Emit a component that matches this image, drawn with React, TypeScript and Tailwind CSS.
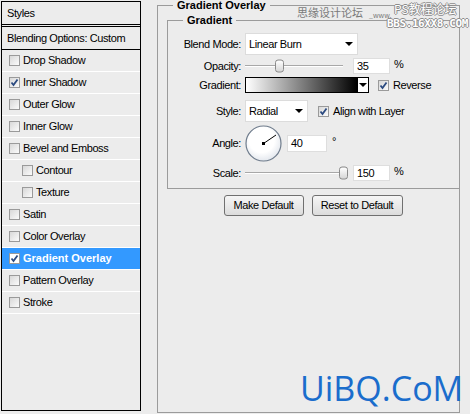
import React from "react";

type Item = { label: string; checked?: boolean; indent?: boolean; active?: boolean };

const items: Item[] = [
  { label: "Drop Shadow" },
  { label: "Inner Shadow", checked: true },
  { label: "Outer Glow" },
  { label: "Inner Glow" },
  { label: "Bevel and Emboss" },
  { label: "Contour", indent: true },
  { label: "Texture", indent: true },
  { label: "Satin" },
  { label: "Color Overlay" },
  { label: "Gradient Overlay", checked: true, active: true },
  { label: "Pattern Overlay" },
  { label: "Stroke" },
];

const Check = ({ checked, white }: { checked?: boolean; white?: boolean }) => (
  <div
    className={`w-[11px] h-[11px] shrink-0 border border-[#9a9a9a] flex items-center justify-center ${
      white ? "bg-white" : "bg-gradient-to-br from-[#d8d8d8] to-[#fbfbfb]"
    }`}
  >
    {checked && (
      <svg width="9" height="9" viewBox="0 0 9 9">
        <path d="M1.5 4.5 L3.5 7 L7.5 1.5" fill="none" stroke="#2b4a80" strokeWidth="1.8" />
      </svg>
    )}
  </div>
);

const Arrow = () => (
  <div className="w-0 h-0 border-l-[4px] border-r-[4px] border-t-[4px] border-l-transparent border-r-transparent border-t-black" />
);

const Slider = ({ pos }: { pos: number }) => (
  <div className="relative w-[98px] h-full ml-[4px] flex items-center">
    <div className="w-full h-[2px] border-t border-[#a8a8a8] border-b border-b-white" />
    <div
      className="absolute top-1/2 -translate-y-1/2 w-[9px] h-[13px] rounded-[3px] border border-[#8a8a8a] bg-gradient-to-b from-white to-[#d6d6d6]"
      style={{ left: pos }}
    />
  </div>
);

const Field = ({ value, w }: { value: string; w: string }) => (
  <div className={`${w} h-[16px] bg-white border border-[#dedede] pl-[3px] flex items-center`}>{value}</div>
);

const Label = ({ children }: { children: React.ReactNode }) => (
  <div className="w-[73px] text-right shrink-0">{children}</div>
);

export default function App() {
  return (
    <div className="relative w-[470px] h-[414px] bg-[#ececec] flex items-start overflow-hidden font-['Liberation_Sans',Arial,sans-serif] text-[11px] text-black tracking-[-0.4px]">
      {/* LEFT LIST */}
      <div className="ml-[1px] mt-[1px] w-[140px] h-[410px] border border-black flex flex-col shrink-0">
        <div className="h-[23px] border-b border-black flex items-center pl-[5px]">Styles</div>
        <div className="h-[1px]" />
        <div className="h-[24px] border-t border-b border-black flex items-center pl-[5px]">
          Blending Options: Custom
        </div>
        {items.map((it) => (
          <div
            key={it.label}
            className={`h-[22px] border-b border-white flex items-center gap-[3px] ${
              it.indent ? "pl-[20px]" : "pl-[7px]"
            } ${it.active ? "bg-[#3399ff] text-white font-bold tracking-normal" : ""}`}
          >
            <Check checked={it.checked} white={it.active} />
            <span>{it.label}</span>
          </div>
        ))}
      </div>

      {/* RIGHT PANEL: group box "Gradient Overlay" */}
      <div className="ml-[16px] mt-[5px] w-[303px] h-[408px] border border-[#9b9b9b] pl-[9px] flex flex-col shrink-0">
        <div className="-mt-[6px] ml-[6px] self-start px-[4px] bg-[#ececec] font-bold tracking-normal leading-[10px]">
          Gradient Overlay
        </div>

        {/* group box "Gradient" */}
        <div className="mt-[10px] w-[293px] border border-[#9b9b9b] pb-[7px] flex flex-col">
          <div className="-mt-[8px] ml-[15px] self-start px-[4px] bg-[#ececec] font-bold tracking-normal leading-[14px]">
            Gradient
          </div>

          <div className="mt-[6px] h-[22px] flex items-center">
            <Label>Blend Mode:</Label>
            <div className="ml-[4px] w-[113px] h-[22px] bg-white border border-[#dcdcdc] pl-[3px] pr-[4px] flex items-center justify-between">
              <span>Linear Burn</span>
              <Arrow />
            </div>
          </div>

          <div className="mt-[2px] h-[18px] flex items-center">
            <Label>Opacity:</Label>
            <Slider pos={30} />
            <div className="ml-[10px]">
              <Field value="35" w="w-[37px]" />
            </div>
            <span className="ml-[4px] self-start leading-[14px]">%</span>
          </div>

          <div className="mt-[2px] h-[16px] flex items-center">
            <Label>Gradient:</Label>
            <div className="ml-[4px] w-[124px] h-[16px] border border-black flex">
              <div className="flex-1 bg-[linear-gradient(to_right,#ffffff,#000000)]" />
              <div className="w-[11px] border-l border-black bg-white flex items-center justify-center">
                <Arrow />
              </div>
            </div>
            <div className="ml-[9px] flex items-center gap-[4px]">
              <Check checked />
              <span>Reverse</span>
            </div>
          </div>

          <div className="mt-[7px] h-[22px] flex items-center">
            <Label>Style:</Label>
            <div className="ml-[4px] w-[63px] h-[22px] bg-white border border-[#dcdcdc] pl-[3px] pr-[4px] flex items-center justify-between">
              <span>Radial</span>
              <Arrow />
            </div>
            <div className="ml-[10px] flex items-center gap-[4px]">
              <Check checked />
              <span>Align with Layer</span>
            </div>
          </div>

          <div className="mt-[3px] h-[37px] flex items-center">
            <Label>Angle:</Label>
            <svg className="ml-[4px] shrink-0" width="37" height="37" viewBox="0 0 37 37">
              <defs>
                <radialGradient id="dial" cx="0.45" cy="0.4" r="0.6">
                  <stop offset="0.6" stopColor="#ffffff" />
                  <stop offset="1" stopColor="#e4e8ee" />
                </radialGradient>
              </defs>
              <circle cx="18.5" cy="18.5" r="17.5" fill="url(#dial)" stroke="#6f7c8c" strokeWidth="1.2" />
              <line x1="18.5" y1="18.5" x2="31" y2="10" stroke="#000" strokeWidth="1" />
              <rect x="17" y="17" width="3" height="3" fill="#000" />
            </svg>
            <div className="ml-[5px]">
              <div className="w-[40px] h-[17px] bg-white border border-[#dedede] pl-[3px] flex items-center">40</div>
            </div>
            <span className="ml-[5px] self-start mt-[11px] leading-[10px]">°</span>
          </div>

          <div className="mt-[3px] h-[16px] flex items-center">
            <Label>Scale:</Label>
            <Slider pos={94} />
            <div className="ml-[10px]">
              <Field value="150" w="w-[37px]" />
            </div>
            <span className="ml-[4px] self-start leading-[12px]">%</span>
          </div>
        </div>

        <div className="mt-[6px] flex justify-center gap-[8px]">
          <button className="w-[80px] h-[21px] rounded-[3px] border border-[#707070] bg-gradient-to-b from-[#f6f6f6] to-[#dcdcdc]">
            Make Default
          </button>
          <button className="w-[91px] h-[21px] rounded-[3px] border border-[#707070] bg-gradient-to-b from-[#f6f6f6] to-[#dcdcdc]">
            Reset to Default
          </button>
        </div>
      </div>

      {/* WATERMARKS */}
      <div className="absolute left-[297px] top-[6px] flex items-end text-[#7a7a7a] font-['Noto_Sans_CJK_SC',sans-serif] text-[11px] leading-[13px] tracking-normal">
        <span>思缘设计论坛</span>
        <span className="ml-[6px] text-[7px] leading-[8px]">_www.</span>
      </div>
      <div className="absolute left-[394px] top-[2px] text-white font-['Noto_Sans_CJK_SC',sans-serif] text-[12px] leading-[14px] tracking-normal [text-shadow:1px_0_#8c8c8c,-1px_0_#8c8c8c,0_1px_#8c8c8c,0_-1px_#8c8c8c]">
        PS教程论坛
      </div>
      <div className="absolute left-[387px] top-[17px] text-white font-['DejaVu_Sans_Mono',monospace] font-bold text-[11px] leading-[13px] tracking-[-0.4px] [text-shadow:1px_0_#8c8c8c,-1px_0_#8c8c8c,0_1px_#8c8c8c,0_-1px_#8c8c8c]">
        BBS.16XX8.COM
      </div>
      <div className="absolute left-[300px] top-[368px] text-[#1a6dcc] font-['Open_Sans',sans-serif] text-[34px] leading-[40px] tracking-normal">
        UiBQ.CoM
      </div>
    </div>
  );
}
